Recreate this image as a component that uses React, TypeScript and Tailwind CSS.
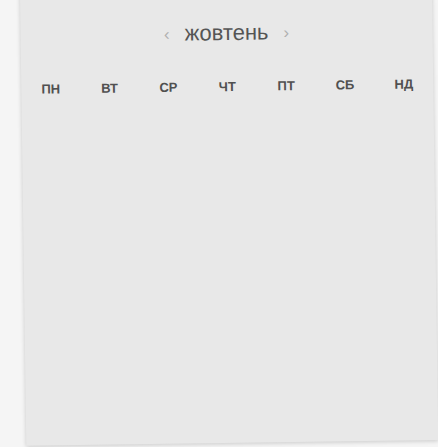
import React from 'react';

const DAYS = ['пн', 'вт', 'ср', 'чт', 'пт', 'сб', 'нд'];

export default function App() {
  return (
    <div className="h-[447px] w-[438px] overflow-hidden bg-[#f5f5f5] font-['Liberation_Sans',Arial,sans-serif]">
      <div className="ml-[23px] mt-[-25px] h-[468px] w-[412px] rotate-[-0.8deg] bg-[#e8e8e8] shadow-[0_1px_4px_rgba(0,0,0,0.18)]">
        <div className="flex items-center justify-center gap-[15px] pt-[44px]">
          <span className="text-[17px] leading-none text-[#b0b0b0]">‹</span>
          <span className="text-[22px] leading-[28px] text-[#555]">жовтень</span>
          <span className="text-[17px] leading-none text-[#b0b0b0]">›</span>
        </div>
        <div className="mt-[32px] grid grid-cols-7">
          {DAYS.map((d) => (
            <div key={d} className="text-center text-[13px] font-bold uppercase leading-[16px] text-[#505050]">
              {d}
            </div>
          ))}
        </div>
      </div>
    </div>
  );
}
